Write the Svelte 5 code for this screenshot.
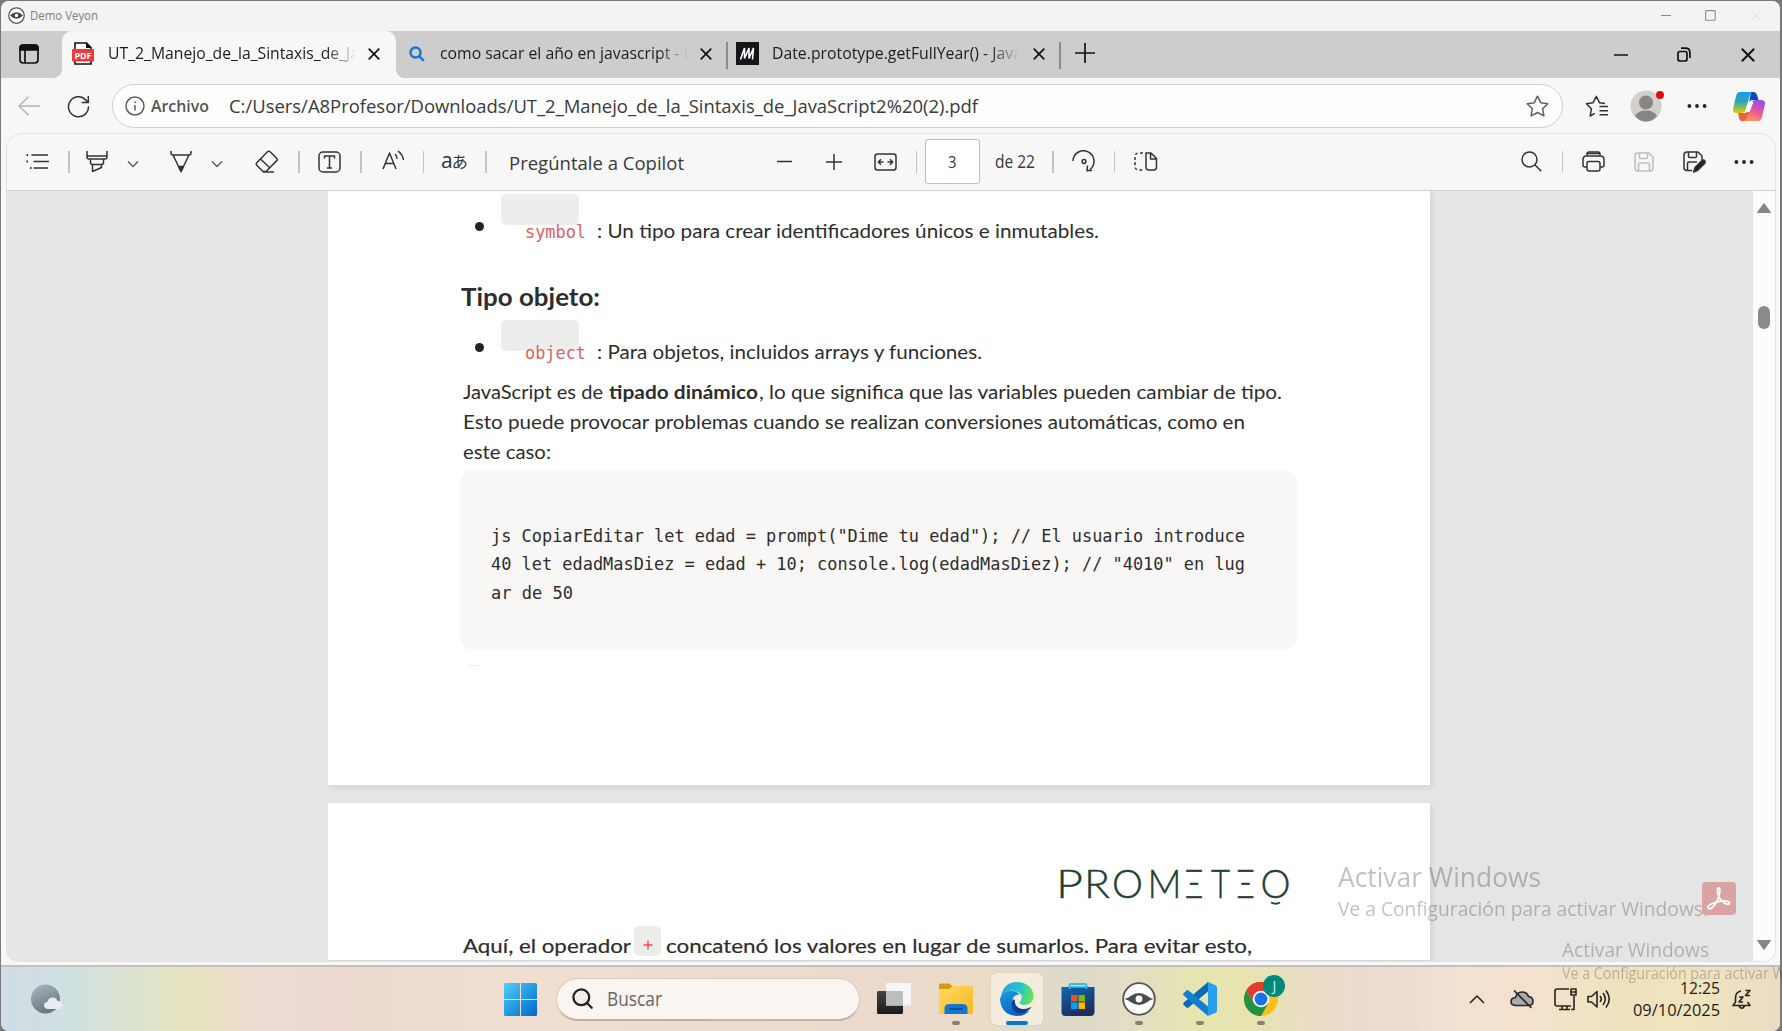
<script>
  const codeLines = [
    { text: 'js CopiarEditar let edad = prompt("Dime tu edad"); // El usuario introduce', width: 754 },
    { text: '40 let edadMasDiez = edad + 10; console.log(edadMasDiez); // "4010" en lug', width: 754 },
    { text: 'ar de 50', width: 82 }
  ];
  const bullets = {
    symbol: { text: ': Un tipo para crear identificadores únicos e inmutables.', width: 502 },
    object: { text: ': Para objetos, incluidos arrays y funciones.', width: 385 }
  };
  const brand = [
    { glyph: 'P', x: -4, width: 27 },
    { glyph: 'R', x: 24, width: 26 },
    { glyph: 'O', x: 52, width: 31 },
    { glyph: 'M', x: 87.5, width: 34 },
    { glyph: 'Ξ', x: 125, width: 18 },
    { glyph: 'T', x: 151, width: 19 },
    { glyph: 'Ξ', x: 176.5, width: 18 },
    { glyph: 'O', x: 200.5, width: 30 }
  ];
</script>

<!-- One line of text set to an exact measure; the box is the cap height, its bottom edge the baseline -->
{#snippet label(text, width, size, kind = '')}
  <svg class="label {kind}" {width} height={Math.round(size * 0.72)}>
    <text x="0" y={Math.round(size * 0.72)} font-size={size} textLength={width} lengthAdjust="spacingAndGlyphs">{text}</text>
  </svg>
{/snippet}

{#snippet cross(size, kind = '')}
  <svg class="line {kind}" width={size} height={size} viewBox="0 0 12 12"><path d="M.7.7l10.6 10.6M11.3.7L.7 11.3" /></svg>
{/snippet}

{#snippet dots(kind)}
  <svg class="solid {kind}" width="20" height="6" viewBox="0 0 20 6"><circle cx="2.4" cy="3" r="1.9" /><circle cx="10" cy="3" r="1.9" /><circle cx="17.6" cy="3" r="1.9" /></svg>
{/snippet}

{#snippet bar(kind)}<span class="bar {kind}"></span>{/snippet}

{#snippet chevron(kind)}
  <svg class="line grey {kind}" width="12" height="8" viewBox="0 0 12 8"><path d="M1 1.5l5 5 5-5" /></svg>
{/snippet}

{#snippet bulletRow(name)}
  <div class="item">
    <span class="bullet"></span>
    <span class="chip"></span>
    {@render label(name, 61, 17, 'mono red')}
    {@render label(bullets[name].text, bullets[name].width, 19.5, 'doc after-code')}
  </div>
{/snippet}

<div class="desktop">
  <div class="window">
    <header class="titlebar">
      <svg width="17" height="17" viewBox="0 0 34 34"><circle cx="17" cy="17" r="15.5" fill="#fff" stroke="#555" stroke-width="2.5" /><path d="M4 17q13-13 26 0q-13 13-26 0" fill="#444" /><circle cx="17" cy="17" r="3.4" fill="#fff" /></svg>
      {@render label('Demo Veyon', 68, 12.5, 'ui muted app-name')}
      <span class="spring"></span>
      <svg class="line faint" width="10" height="10" viewBox="0 0 10 10"><path d="M0 5.5h10" /></svg>
      <svg class="line faint outer-max" width="11" height="11" viewBox="0 0 11 11"><rect x=".6" y=".6" width="9.6" height="9.6" rx=".6" /></svg>
      {@render cross(11, 'ghost outer-close')}
    </header>

    <nav class="tabs">
      <div class="tab-menu">
        <svg class="line black" width="20" height="20" viewBox="0 0 20 20"><rect x="1" y="1" width="18" height="18" rx="3.2" stroke-width="1.7" /><path d="M1 6V4q0-3 3-3h12q3 0 3 3v2z" fill="#111" /><path d="M6 6v13" /></svg>
      </div>
      <div class="tab active">
        <svg width="22" height="23" viewBox="0 0 22 23"><path d="M3 8V1h11.5L19 5.5V8M3 19v3h16v-3" fill="#fff" stroke="#111" stroke-width="1.6" /><path d="M14 0v6h5.5z" fill="#111" /><rect y="7" width="22" height="12.5" rx="1" fill="#f0393d" /><text x="2.5" y="17" class="pdf-text" textLength="17">PDF</text></svg>
        <span class="tab-title">{@render label('UT_2_Manejo_de_la_Sintaxis_de_Ja', 251, 17, 'ui')}</span>
        {@render cross(12, 'black')}
      </div>
      <div class="tab second">
        <svg class="line blue" width="16" height="16" viewBox="0 0 16 16"><circle cx="6.5" cy="6.5" r="5" /><path d="M10.2 10.2l4.6 4.6" /></svg>
        <span class="tab-title">{@render label('como sacar el año en javascript - D', 255, 17, 'ui')}</span>
        {@render cross(12, 'black')}
      </div>
      <div class="tab third">
        <svg width="23" height="23" viewBox="0 0 23 23"><rect width="23" height="23" fill="#15141a" /><path d="M4.500 17.500L8.500 6V16.500L13 6V16.500L17.500 6L16.500 17.500" fill="none" stroke="#fff" stroke-width="1.6" /></svg>
        <span class="tab-title">{@render label('Date.prototype.getFullYear() - Java', 250, 17, 'ui')}</span>
        {@render cross(12, 'black')}
      </div>
      <svg class="line black new-tab" width="20" height="20" viewBox="0 0 20 20"><path d="M10 0v20M0 10h20" /></svg>
      <span class="spring"></span>
      <svg class="line black win-min" width="14" height="14" viewBox="0 0 14 14"><path d="M0 7h14" /></svg>
      <svg class="line black win-restore" width="14" height="15" viewBox="0 0 14 15"><rect x="1" y="4.5" width="9" height="9.5" rx="2" /><path d="M4 1.2h4.5q4.4 0 4.4 4.4V11" /></svg>
      {@render cross(14, 'black win-close')}
    </nav>

    <div class="address-row">
      <svg class="line back" width="22" height="20" viewBox="0 0 22 20"><path d="M22 10H1M10.5.8L1 10l9.500 9.200" /></svg>
      <svg class="line reload" width="23" height="23" viewBox="0 0 23 23"><path d="M21.500 11.500A10 10 0 1 1 18.800 4.900L21 7.500M21.300 1v6.600h-6.600" /></svg>
      <div class="pill">
        <svg class="line grey" width="20" height="20" viewBox="0 0 20 20"><circle cx="10" cy="10" r="9" /><path d="M10 9v5.500M10 5.200v1.800" /></svg>
        {@render label('Archivo', 58, 17, 'ui semi scheme')}
        {@render label('C:/Users/A8Profesor/Downloads/UT_2_Manejo_de_la_Sintaxis_de_JavaScript2%20(2).pdf', 749, 18.5, 'ui soft url')}
        <span class="spring"></span>
        <svg class="line grey" width="23" height="23" viewBox="0 0 23 23"><path d="M11.500 1.200l3.200 6.500 7.100 1-5.200 5 1.300 7.200-6.400-3.400-6.400 3.400 1.300-7.200-5.200-5 7.100-1z" /></svg>
      </div>
      <svg class="line fav" width="24" height="23" viewBox="0 0 24 23"><path d="M9.700 18.300L5.200 21l1.200-7.300-5-5 6.700-1L11.300 1.300l3.200 6.400 5.500.9M14.500 11.500H23M14.500 15.700H23M14.500 19.800H23" /></svg>
      <div class="avatar">
        <svg width="32" height="32" viewBox="0 0 32 32"><circle cx="16" cy="16" r="15.500" fill="#d2d0ce" /><circle cx="16" cy="12.500" r="7" fill="#8a8583" /><path d="M5 26q3-5.500 11-5.500T27 26q-4.500 5.500-11 5.500T5 26" fill="#8a8583" /></svg>
        <span class="alert"></span>
      </div>
      {@render dots('nav-dots')}
      <svg class="copilot" width="32" height="29" viewBox="0 0 32 29">
        <defs>
          <linearGradient id="cpA" x1="0" y1="0" x2="0" y2="1"><stop offset="0" stop-color="#1a9df0" /><stop offset=".45" stop-color="#2ba7b8" /><stop offset=".75" stop-color="#8cc152" /><stop offset="1" stop-color="#f5c400" /></linearGradient>
          <linearGradient id="cpB" x1=".6" y1="0" x2=".3" y2="1"><stop offset="0" stop-color="#9b4dea" /><stop offset=".5" stop-color="#e8559c" /><stop offset="1" stop-color="#ff9a57" /></linearGradient>
        </defs>
        <path d="M18 0h3q2 0 3 3l1.500 5H19q-2 0-3 3z" fill="#1246c0" />
        <path d="M8 29q-1.500-1-2-3l-1-5h8l2-5 2 6-2 5q-1 2-3 2z" fill="#f0603a" />
        <path d="M7 0h13q-2 0-3 3l-4.500 15q-1 3-4 3H4q-4.500 0-4-4L3 4q1-4 4-4z" fill="url(#cpA)" />
        <path d="M25 29H11q2 0 3-3l4.500-15q1-3 4-3H28q4.500 0 4 4l-3 13q-1 4-4 4z" fill="url(#cpB)" />
        <path d="M17.500 10h3l-4 10h-4z" fill="#fff" />
      </svg>
    </div>

    <section class="viewer">
      <div class="pdfbar">
        <svg class="line t-list" width="23" height="17" viewBox="0 0 23 17"><path d="M5.500 2H22M7.500 8.500H23M7.500 15H22" /><path class="pips" d="M1 2h1.500M1 8.500h1.500M4.500 15H6" transform="translate(-.5)" /></svg>
        {@render bar('b1')}
        <svg class="line t-mark" width="22" height="23" viewBox="0 0 22 23"><path d="M1 1v6q0 2 2 2h16q2 0 2-2V1M1 6h20M4.500 9v3.500q0 2 2 2h9q2 0 2-2V9M6.500 14.500v7l9-4v-3" /></svg>
        {@render chevron('c1')}
        <svg class="line t-pen" width="22" height="23" viewBox="0 0 22 23"><path d="M1 1v2q0 2 2 2h16q2 0 2-2V1M3 5l8 16.500L19 5M8.500 16.500h5" /><path d="M9 17.500h4l-2 4z" fill="#333" /></svg>
        {@render chevron('c2')}
        <svg class="line t-erase" width="24" height="23" viewBox="0 0 24 23"><path d="M2 12.500L12.500 1.800q1.300-1.200 2.600 0l6.500 6.500q1.300 1.300 0 2.600L11 21.500H8L2 15.500q-1.500-1.500 0-3M5.500 9l9.500 9M8 22h11" /></svg>
        {@render bar('b2')}
        <svg class="line t-text" width="23" height="22" viewBox="0 0 23 22"><rect x="1" y="1" width="21" height="20" rx="4" /><path d="M6.500 7.500V5h10v2.500M11.500 5v12M9 17h5" /></svg>
        {@render bar('b2')}
        <svg class="line t-read" width="22" height="20" viewBox="0 0 22 20"><path d="M1 19L7.500 3 14 19M3.500 13.500h8M13 4q2 2 2 5M16 1q5 4 5.500 9" /></svg>
        {@render bar('b2')}
        <div class="translate"><span class="latin">a</span><span class="kana">あ</span></div>
        {@render bar('b3')}
        {@render label('Pregúntale a Copilot', 175, 19, 'ui soft ask')}
        <svg class="line t-minus" width="15" height="15" viewBox="0 0 15 15"><path d="M0 7.500h15" /></svg>
        <svg class="line t-plus" width="16" height="16" viewBox="0 0 16 16"><path d="M0 8h16M8 0v16" /></svg>
        <svg class="line t-fit" width="23" height="18" viewBox="0 0 23 18"><rect x="1" y="1" width="21" height="16" rx="2.500" /><path d="M9.500 9h-5M7 6.300L4.300 9 7 11.700M13.500 9h5M16 6.300L18.700 9 16 11.700" /></svg>
        {@render bar('b4')}
        <div class="page-box">{@render label('3', 8.5, 16, 'ui soft')}</div>
        {@render label('de 22', 40, 17.5, 'ui soft of')}
        {@render bar('b5')}
        <svg class="line t-rotate" width="24" height="23" viewBox="0 0 24 23"><path d="M1 11A10.500 10.500 0 1 1 18 19.500M14.500 20.500h5.500M15.500 15.500l-.500 6" /><circle cx="12" cy="11.500" r="1.900" /></svg>
        {@render bar('b5')}
        <svg class="line t-pages" width="24" height="19" viewBox="0 0 24 19"><path d="M12 1h5l5.500 5.500V15q0 3-3 3H15q-3 0-3-3zM16.500 1v6H22.500" /><path d="M9 1H5Q1 1 1 5v9q0 4 4 4h4" stroke-dasharray="3 2.200" /></svg>
        <span class="spring"></span>
        <svg class="line" width="21" height="21" viewBox="0 0 21 21"><circle cx="8.500" cy="8.500" r="7.500" /><path d="M13.800 13.800L20.300 20.300" /></svg>
        {@render bar('b6')}
        <svg class="line t-print" width="23" height="21" viewBox="0 0 23 21"><path d="M5 5V3q0-2 2-2h9q2 0 2 2v2M5 16H3q-2 0-2-2V8.500Q1 5 4.500 5h14Q22 5 22 8.500V14q0 2-2 2h-2" /><rect x="5" y="10.500" width="13" height="9.500" rx="2" /><path d="M5.500 2.500h12" /></svg>
        <svg class="line disabled t-save" width="20" height="20" viewBox="0 0 20 20"><path d="M1 4q0-3 3-3h11l4 4v11q0 3-3 3H4q-3 0-3-3zM5.500 1v4.500q0 1 1 1h6q1 0 1-1V1M4.500 19v-6.500q0-1.500 1.500-1.500h8q1.500 0 1.500 1.500V19" /></svg>
        <svg class="line t-saveas" width="23" height="22" viewBox="0 0 23 22"><path d="M9 19.500H4q-3 0-3-3V4q0-3 3-3h11l4 4v4M5.500 1v4.500q0 1 1 1h6q1 0 1-1V1M4.500 19v-6.500q0-1.500 1.500-1.500h8" /><path d="M10.500 21l1.500-4.500L19 9.500q2-1.200 3 .7.500 1.200-.4 2.200L14.500 19.500z" fill="#222" /></svg>
        {@render dots('pdf-dots')}
      </div>

      <div class="canvas">
        <div class="pages">
          <article class="page first">
            {@render bulletRow('symbol')}
            <h2 class="heading">{@render label('Tipo objeto:', 139, 24, 'doc bold')}</h2>
            {@render bulletRow('object')}
            <p class="text lead">
              {@render label('JavaScript es de', 140, 19.5, 'doc')}
              {@render label('tipado dinámico', 149, 19.5, 'doc bold')}
              {@render label(', lo que significa que las variables pueden cambiar de tipo.', 523, 19.5, 'doc')}
            </p>
            <p class="text">{@render label('Esto puede provocar problemas cuando se realizan conversiones automáticas, como en', 782, 19.5, 'doc')}</p>
            <p class="text">{@render label('este caso:', 88, 19.5, 'doc')}</p>
            <div class="code">
              {#each codeLines as line}
                <div class="code-line">{@render label(line.text, line.width, 17, 'mono')}</div>
              {/each}
            </div>
            <span class="stub"></span>
          </article>
          <article class="page next">
            <svg class="brand" width="232" height="36" viewBox="0 0 232 36">
              {#each brand as letter}
                <text x={letter.x} y="29" textLength={letter.width} lengthAdjust="spacingAndGlyphs">{letter.glyph}</text>
              {/each}
              <path d="M211 33.500q5 2.500 9 0" />
            </svg>
            <p class="text answer">
              {@render label('Aquí, el operador', 168, 19.5, 'doc medium')}
              <span class="plus-chip"><svg width="10" height="10" viewBox="0 0 10 10"><path d="M5 .5v9M.5 5h9" stroke="#f0484c" stroke-width="1.300" /></svg></span>
              {@render label('concatenó los valores en lugar de sumarlos. Para evitar esto,', 586, 19.5, 'doc medium')}
            </p>
          </article>
        </div>
        <div class="scrollbar">
          <svg width="14" height="10" viewBox="0 0 14 10"><path d="M7 .5L13.500 9.500H.5z" fill="#858585" stroke="#858585" stroke-linejoin="round" /></svg>
          <span class="thumb"></span>
          <span class="spring"></span>
          <svg width="14" height="10" viewBox="0 0 14 10"><path d="M7 9.500L13.500.5H.5z" fill="#858585" stroke="#858585" stroke-linejoin="round" /></svg>
        </div>
      </div>
    </section>

    <footer class="taskbar">
      <svg class="weather" width="31" height="30" viewBox="0 0 31 30"><defs><linearGradient id="moon" x2=".4" y2="1"><stop stop-color="#a9b6c4" /><stop offset="1" stop-color="#6f7780" /></linearGradient></defs><circle cx="14.500" cy="15" r="14.500" fill="url(#moon)" /><path d="M17 25q-4-.5-4-3.800 0-3 3.300-3.300 1.300-4.400 5.300-4.400 3.600 0 4.700 3.300 4.700.4 4.700 4.200 0 3.400-3.800 4z" fill="#e9edf3" /></svg>
      <svg class="start" width="33" height="33" viewBox="0 0 33 33"><defs><linearGradient id="win" gradientUnits="userSpaceOnUse" x1="0" y1="0" x2="33" y2="33"><stop stop-color="#4cd0ff" /><stop offset="1" stop-color="#0067c8" /></linearGradient></defs><path d="M1.500 0H16v16H0V1.500Q0 0 1.500 0M17 0h14.500Q33 0 33 1.500V16H17zM0 17h16v16H1.500Q0 33 0 31.500zM17 17h16v14.500q0 1.500-1.500 1.500H17z" fill="url(#win)" /></svg>
      <div class="search">
        <svg width="21" height="21" viewBox="0 0 21 21" fill="#f1eeec" stroke="#222" stroke-width="2.300" stroke-linecap="round"><circle cx="9.300" cy="9.300" r="7.900" /><path d="M15 15l4.700 4.700" /></svg>
        {@render label('Buscar', 55, 20, 'ui hint')}
      </div>
      <svg class="views" width="34" height="32" viewBox="0 0 34 32"><defs><linearGradient id="tv" x2="0" y2="1"><stop stop-color="#444" /><stop offset="1" stop-color="#1b1b1b" /></linearGradient></defs><rect y="8" width="26" height="23" rx="1.500" fill="url(#tv)" /><rect x="9" width="25" height="22.500" rx="1" fill="#f6f6f6" /><rect x="9" y="8" width="17" height="14.500" fill="#bdbdbd" /></svg>
      <div class="app">
        <svg width="34" height="32" viewBox="0 0 34 32"><defs><linearGradient id="fold" x2="1" y2="1"><stop stop-color="#ffdb63" /><stop offset="1" stop-color="#fbb81f" /></linearGradient></defs><path d="M0 2q0-1.500 1.500-1.500h9L14 4h-1v5H0z" fill="#d9990b" /><path d="M0 6h10l4-3h19q1 0 1 1v26q0 1-1 1H1q-1 0-1-1z" fill="url(#fold)" /><path d="M5.500 31v-5.500Q5.500 21 10 21h14q4.500 0 4.500 4.500V31z" fill="#1379cf" /><rect x="10.500" y="25" width="13" height="2" rx="1" fill="#0a4f9b" /></svg>
        <span class="dash"></span>
      </div>
      <div class="app current">
        <svg width="34" height="34" viewBox="0 0 34 34">
          <defs><linearGradient id="edG" y1=".3" y2=".5"><stop stop-color="#2aa4dc" /><stop offset=".55" stop-color="#29c3cf" /><stop offset="1" stop-color="#67e34d" /></linearGradient><linearGradient id="edB" x2=".4" y2="1"><stop stop-color="#1b9ce0" /><stop offset="1" stop-color="#0b62c8" /></linearGradient></defs>
          <path d="M1 14Q4 0 17 0q10 0 15 8 3.500 7-.500 12-4 4.500-10 2.500-3-1-1.500-3 3.500-4 0-8-5-4-11-2.500T1 14" fill="url(#edG)" />
          <path d="M0 17Q1 10.500 9 9q7-1 10.500 3.500-6 0-7 6-.500 7 6 10 6 2 11 0Q25 34 17 34 1 33 0 17" fill="url(#edB)" />
          <path d="M12.500 18.500q-2.500 7 3 11.500 7 4 15.500-4 1-1.500-1-.500-7 3-12 0-4-3-3-7.500-2-1-2.500.5" fill="#123f8c" />
        </svg>
        <span class="dash wide"></span>
      </div>
      <div class="app">
        <svg width="34" height="33" viewBox="0 0 34 33"><defs><linearGradient id="sto" x2=".4" y2="1"><stop stop-color="#0b67b5" /><stop offset="1" stop-color="#1d2f5e" /></linearGradient></defs><path d="M8.500 6V2.500Q8.500 1 10 1h14q1.500 0 1.500 1.500V6" fill="none" stroke="#37b8ee" stroke-width="2" /><path d="M.5 4h33v25q0 4-4 4h-25q-4 0-4-4z" fill="url(#sto)" /><path d="M8.500 6V4h17v2" fill="none" stroke="#37b8ee" stroke-width="1.500" /><path d="M10 12h6.500v6.500H10z" fill="#f25022" /><path d="M17.500 12H24v6.500h-6.500z" fill="#7fba00" /><path d="M10 19.500h6.500V26H10z" fill="#00a4ef" /><path d="M17.500 19.500H24V26h-6.500z" fill="#ffb900" /></svg>
      </div>
      <div class="app">
        <svg width="34" height="34" viewBox="0 0 34 34"><circle cx="17" cy="17" r="15.800" fill="#fff" stroke="#555" stroke-width="1.800" /><path d="M2.500 17q4-1 6-3 8.500-6 17 0 2 2 6 3-4 1-6 3-8.500 6-17 0-2-2-6-3" fill="#4c4c4c" /><circle cx="17" cy="17" r="3.400" fill="#fff" /></svg>
        <span class="dash"></span>
      </div>
      <div class="app">
        <svg width="34" height="34" viewBox="0 0 34 34"><path d="M25 0v9.500L5.500 25.500q-1 .8-2 0L.8 23q-1.300-1.200 0-2.500z" fill="#0a69b8" /><path d="M25 34v-9.500L5.500 8.500q-1-.8-2 0L.8 11q-1.300 1.200 0 2.500z" fill="#1280cf" /><path d="M25 0l7.500 3.300Q34 4 34 6v22q0 2-1.500 2.700L25 34z" fill="#26a0ee" /></svg>
        <span class="dash"></span>
      </div>
      <div class="app">
        <svg width="34" height="34" viewBox="0 0 34 34"><circle cx="17" cy="17" r="17" fill="#f9c01b" /><path d="M17 17L2.300 8.500A17 17 0 0 1 31.700 8.500z" fill="#e33b2e" /><path d="M17 9h14.900A17 17 0 0 0 2.300 8.500L10 21z" fill="#e33b2e" /><path d="M2.300 8.500L10 21l7 4.500L17 34A17 17 0 0 1 2.300 8.500" fill="#229342" /><path d="M17 34l7.500-13-7.500 4z" fill="#229342" /><circle cx="17" cy="17" r="8.300" fill="#fff" /><circle cx="17" cy="17" r="6.500" fill="#1a73e8" /></svg>
        <span class="profile">J</span>
        <span class="dash"></span>
      </div>
      <span class="spring"></span>
      <svg class="tray up" width="16" height="9" viewBox="0 0 16 9"><path d="M1 8l7-7 7 7" /></svg>
      <svg class="tray cloud" width="24" height="19" viewBox="0 0 24 19"><path d="M6 15.500Q1 15.500 1 11.500 1 8 5.500 7.500 7 2 12 2q5 0 6.500 4.500Q23 7 23 11.500q0 4-5 4z" fill="#aaa" /><path d="M4 .5L21.500 18" /></svg>
      <svg class="tray net" width="24" height="24" viewBox="0 0 24 24"><path d="M15 2H3Q1 2 1 4v13q0 2 2 2h14M8 19v3M13 19v3M5 22.500h11M20 9v13.500h-3M17 2h5v6h-5zM17 5h5" /></svg>
      <svg class="tray vol" width="24" height="20" viewBox="0 0 24 20"><path d="M1 7.500V13h3.500L10 18V2.500L4.500 7.500zM13 7q2.500 3 0 6M16 4q4.500 6 0 12M19 1.500q6.500 8.500 0 17" /></svg>
      <div class="clock">
        {@render label('12:25', 40, 16.5, 'ui')}
        {@render label('09/10/2025', 87, 16.5, 'ui')}
      </div>
      <svg class="tray bell" width="20" height="20" viewBox="0 0 20 20"><path d="M9 2Q3.500 3 3.500 9v4L1 16.500h17L15.500 13M7 17q3 4.500 5.500 0M7 8h4l-4 5h4M13.500 1.500h4.500l-4.500 5h4.500" /></svg>
    </footer>
  </div>

  <!-- Activation notices drawn by the system over every window -->
  <div class="notice near">
    {@render label('Activar Windows', 203, 27, 'ui')}
    {@render label('Ve a Configuración para activar Windows.', 370, 20, 'ui')}
  </div>
  <div class="notice far">
    {@render label('Activar Windows', 147, 20, 'ui')}
    {@render label('Ve a Configuración para activar Windows.', 275, 15.5, 'ui')}
  </div>
  <div class="acrobat">
    <svg width="26" height="25" viewBox="0 0 26 25"><path d="M2 22c-1-3 7-6 13-7 6-.7 9 .5 8.500 2.500-1 2-7-.5-10-5.500C11 7 11 2 12.500 2c2.500 0 1.500 6-1.500 13-2.500 5.500-7 9.500-9 7" /></svg>
  </div>
</div>

<style>
  :global(body) { background: #6e7a80; overflow: hidden; }
  .desktop { position: relative; box-sizing: border-box; width: 1782px; height: 1031px; padding: 1px 2px 0 1px; overflow: hidden; background: #77797a; }
  .window { display: flex; flex-direction: column; width: 1779px; height: 1030px; border-radius: 8px; overflow: hidden; background: #f7f7f7; }
  svg { display: block; flex: none; }
  .spring { flex: 1; }

  .label { overflow: visible; fill: #2d2d2d; }
  .label text { white-space: pre; }
  .ui { font-family: "Open Sans", "Noto Sans", sans-serif; fill: #1c1c1c; }
  .doc { font-family: Lato, "Open Sans", sans-serif; }
  .mono { font-family: "DejaVu Sans Mono", monospace; }
  .bold { font-weight: 700; }
  .semi { font-weight: 600; fill: #555; }
  .medium { stroke: #2d2d2d; stroke-width: .2px; }
  .red { fill: #e0605f; }
  .muted { fill: #808080; }
  .soft { fill: #3a3a3a; }
  .hint { fill: #666; }

  .line { fill: none; stroke: #333; stroke-width: 1.5; stroke-linejoin: round; }
  .solid { fill: #262626; }
  .black { stroke: #111; stroke-width: 1.7; }
  .grey { stroke: #5f5f5f; }
  .faint { stroke: #8b8b8b; stroke-width: 1.1; }
  .ghost { stroke: #dcdcdc; stroke-width: 1; }
  .blue { stroke: #1976d2; stroke-width: 2.4; }
  .disabled { stroke: #bebebe; }
  .pips { stroke-width: 2.2; }

  .titlebar { display: flex; align-items: center; flex: none; height: 30px; padding: 0 18px 2px 7px; box-sizing: border-box; background: #f3f3f3; }
  .app-name { margin-left: 5px; }
  .outer-max { margin-left: 34px; }
  .outer-close { margin-left: 35px; }

  .tabs { display: flex; align-items: center; flex: none; height: 47px; padding-right: 25px; background: #cdcdcd; }
  .tab-menu { width: 61px; padding: 0 0 2px 18px; box-sizing: border-box; }
  .tab { display: flex; align-items: center; height: 47px; box-sizing: border-box; }
  .active { position: relative; width: 334px; padding: 0 16px 2px 10px; background: #f7f7f7; border-radius: 10px 10px 0 0; }
  .active::before, .active::after { content: ""; position: absolute; bottom: 0; width: 8px; height: 8px; }
  .active::before { left: -8px; background: radial-gradient(circle at 0 0, transparent 7.5px, #f7f7f7 8px); }
  .active::after { right: -8px; background: radial-gradient(circle at 100% 0, transparent 7.5px, #f7f7f7 8px); }
  .tab-title { display: flex; align-items: center; height: 30px; margin-left: 14px; width: 248px; flex: none; overflow: hidden; padding-bottom: 1px; mask-image: linear-gradient(90deg, #000 88%, transparent 100%); }
  .active :global(.black), .second :global(.black), .third :global(.black) { margin-left: auto; }
  .second { width: 332px; padding: 0 14px 2px 13px; border-right: 2px solid transparent; border-image: linear-gradient(transparent 11px, #8c8c8c 11px 38px, transparent 38px) 0 2 0 0; }
  .second .tab-title { margin-left: 15px; }
  .third { width: 333px; padding: 0 14px 2px 8px; border-right: 2px solid transparent; border-image: linear-gradient(transparent 11px, #8c8c8c 11px 38px, transparent 38px) 0 2 0 0; }
  .third .tab-title { margin-left: 13px; }
  .new-tab { margin: 0 0 3px 14px; }
  .win-restore { margin-left: 49px; }
  .win-close { margin-left: 50px; }
  .pdf-text { font: 700 9px "Open Sans", sans-serif; fill: #fff; }

  .address-row { display: flex; align-items: center; flex: none; height: 55px; padding: 1px 15px 0 17px; box-sizing: border-box; }
  .back { stroke: #b4b4b4; }
  .reload { margin-left: 27px; }
  .pill { display: flex; align-items: center; box-sizing: border-box; width: 1452px; height: 44px; margin-left: 22px; padding: 0 13px 0 12px; border: 1.5px solid #d0d0d0; border-radius: 22px; background: #fdfdfd; }
  .scheme { margin-left: 6px; }
  .url { margin: 1px 0 0 20px; }
  .fav { margin-left: 22px; }
  .avatar { position: relative; margin-left: 21px; }
  .alert { position: absolute; top: 1px; right: -2px; width: 8px; height: 8px; border-radius: 50%; background: #e00b0b; }
  .nav-dots { margin-left: 25px; }
  .copilot { margin-left: 26px; }

  .viewer { display: flex; flex-direction: column; flex: none; height: 829px; width: 1770px; margin-left: 5px; box-sizing: border-box; border: 1px solid #e3e3e3; border-radius: 16px 16px 12px 12px; overflow: hidden; }
  .pdfbar { display: flex; align-items: center; flex: none; box-sizing: border-box; height: 57px; padding: 0 21px 1px 19px; border-bottom: 1.5px solid #cfcfcf; }
  .bar { flex: none; width: 1.5px; height: 22px; background: #c4c4c4; }
  .b1 { margin-left: 19px; }
  .t-mark { margin-left: 16.5px; }
  .c1 { margin-left: 19px; margin-top: 4px; }
  .t-pen { margin-left: 31px; }
  .c2 { margin-left: 19px; margin-top: 4px; }
  .t-erase { margin-left: 32px; }
  .b2 { margin-left: 19px; }
  .t-text { margin-left: 18.5px; }
  .t-read { margin-left: 20px; margin-top: -3px; }
  .translate { display: flex; align-items: baseline; width: 27px; margin: -3px 0 0 17px; color: #333; }
  .latin { font: 21px/24px "Open Sans", sans-serif; }
  .kana { font: 16px/24px "Noto Sans CJK JP", sans-serif; margin-left: -1px; }
  .b3 { margin-left: 17px; }
  .ask { margin-left: 22px; margin-top: 2px; }
  .t-minus { margin-left: 93.5px; }
  .t-plus { margin-left: 34px; }
  .t-fit { margin-left: 32px; }
  .b4 { margin-left: 18.5px; }
  .page-box { display: flex; align-items: center; justify-content: center; flex: none; box-sizing: border-box; width: 55px; height: 45px; margin-left: 8px; border: 1px solid #bdbdbd; border-radius: 3px; background: #fff; }
  .of { margin-left: 14.5px; }
  .b5 { margin-left: 17.5px; }
  .b6 { margin-left: 19.5px; }
  .t-rotate { margin-left: 18.5px; }
  .t-print { margin-left: 19px; }
  .t-pages { margin-left: 19px; }
  .t-save { margin-left: 29px; }
  .t-saveas { margin-left: 29px; }
  .pdf-dots { margin-left: 28px; }

  .canvas { display: flex; flex: 1; min-height: 0; background: #e5e5e5; }
  .pages { flex: 1; padding-left: 321px; overflow: hidden; }
  .page { width: 1102px; box-sizing: border-box; padding-left: 133px; background: #fff; box-shadow: 3px 3px 5px rgba(0, 0, 0, .07); }
  .first { height: 594px; }
  .next { height: 157px; margin-top: 18px; padding-top: 66px; }
  .item { display: flex; align-items: flex-end; height: 54px; padding-left: 14px; }
  .first .item:first-child { height: 47px; }
  .bullet { width: 9px; height: 9px; margin-bottom: 7px; border-radius: 50%; background: #222; }
  .chip { width: 78px; height: 31px; margin: 0 -54px 8px 17px; border-radius: 5px; background: #ededeb; }
  .item:first-child .chip { margin-bottom: 13px; }
  .after-code { margin-left: 11px; }
  .heading, .text { display: flex; align-items: flex-end; margin: 0; }
  .heading { height: 67.5px; }
  .heading + :global(.item) { height: 53.5px; }
  .text { height: 30px; padding-left: 1.7px; }
  .lead { height: 40px; gap: 1px; }
  .lead :global(.bold) { margin-left: 5.5px; }
  .code { display: flex; flex-direction: column; box-sizing: border-box; width: 837px; height: 180px; margin: 11px 0 0 -1.5px; padding: 43px 0 0 31px; border-radius: 14px; background: #f8f7f6; }
  .code-line { display: flex; align-items: flex-end; height: 28.5px; }
  .stub { display: block; width: 12px; height: 1px; margin: 15px 0 0 8px; background: #ececec; }
  .brand { margin-left: 599px; overflow: visible; }
  .brand text { font: 300 38.5px Lato, "Open Sans", sans-serif; fill: #24402f; stroke: #24402f; stroke-width: .4px; }
  .brand path { fill: none; stroke: #24402f; stroke-width: 1.8; }
  .answer { height: 47.5px; }
  .plus-chip { display: flex; align-items: center; justify-content: center; width: 27px; height: 30px; margin: 0 5px -3px 3.5px; padding-top: 8px; box-sizing: border-box; border-radius: 5px; background: #ececeb; }
  .scrollbar { display: flex; flex-direction: column; align-items: center; width: 22px; box-sizing: border-box; padding: 12px 0 11px; background: #fcfcfc; }
  .thumb { width: 12px; height: 23px; margin-top: 93px; border-radius: 6px; background: #8a8a8a; }

  .taskbar { display: flex; align-items: center; flex: none; box-sizing: border-box; height: 66px; margin-top: 3px; padding: 0 28px 0 30px; border-top: 2px solid #c6bfba; background: linear-gradient(90deg, #d0dde7 0, #d1e0e1 70px, #dae2cf 130px, #e4e4c0 175px, #ebdfc5 225px, #ecdcd2 255px, #ecd8d3 310px, #ecdacf 390px, #f0dfcf 500px, #eedccf 700px, #ecdacb 820px, #ebd9cb 910px, #e9dcc5 980px, #dedacb 1070px, #e3dec4 1130px, #e6e5ae 1200px, #e7e3b2 1250px, #e9dcc8 1320px, #ecdad2 1390px, #f3e1d1 1460px, #f3e2cd 1540px, #efe2bd 1620px, #f0e4be 1690px, #eadcc5 1779px); }
  .start { margin-left: 442px; }
  .search { display: flex; align-items: center; flex: none; box-sizing: border-box; width: 304px; height: 43px; margin-left: 19px; padding-left: 15px; gap: 14px; border: 1px solid #d6c9bf; border-bottom: 2px solid #beb2a9; border-radius: 22px; background: #faf5f1; }
  .views { margin-left: 17px; }
  .app { position: relative; display: flex; align-items: center; justify-content: center; flex: none; width: 52px; height: 52px; margin-left: 9.2px; }
  .views + .app { margin-left: 18.5px; }
  .current { border-radius: 6px; background: #f4eddd; box-shadow: 0 0 2px rgba(0, 0, 0, .12); }
  .dash { position: absolute; bottom: 0; left: 50%; width: 8px; height: 4px; margin-left: -4px; border-radius: 2px; background: #89826f; }
  .wide { width: 22px; margin-left: -11px; background: #0b76d1; }
  .profile { position: absolute; top: 2px; left: 28px; width: 22px; height: 22px; border-radius: 50%; background: #00897b; color: #d6efec; text-align: center; font: 14px/22px "Open Sans", sans-serif; }
  .tray { fill: none; stroke: #252525; stroke-width: 1.6; stroke-linejoin: round; }
  .cloud { margin-left: 24.5px; }
  .net { margin-left: 20.5px; }
  .vol { margin-left: 9px; }
  .clock { display: flex; flex-direction: column; align-items: flex-end; gap: 10px; margin-left: 22px; margin-top: -1px; }
  .bell { margin-left: 12px; }

  .notice { position: absolute; display: flex; flex-direction: column; opacity: .27; pointer-events: none; }
  .near { left: 1338px; top: 868px; gap: 15px; }
  .far { left: 1562px; top: 943px; gap: 11px; }
  .acrobat { position: absolute; left: 1702px; top: 882px; display: flex; align-items: center; justify-content: center; width: 34px; height: 33px; border-radius: 4px; background: #d9a4a1; }
  .acrobat svg { fill: none; stroke: #fff; stroke-width: 1.8; }
</style>
